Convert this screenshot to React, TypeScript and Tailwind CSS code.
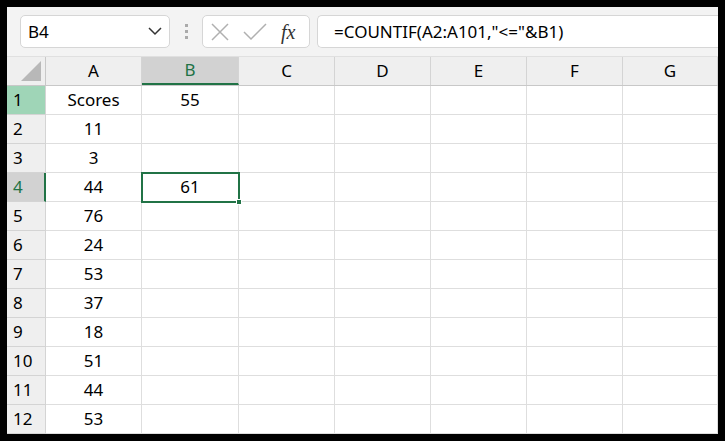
import React from "react";

const cols = ["A","B","C","D","E","F","G"];
const widths = [96,97,96,96,96,96,95];
const colA = ["Scores","11","3","44","76","24","53","37","18","51","44","53"];

export default function App() {
  return (
    <div className="w-[725px] h-[441px] bg-black pt-[7px] pl-[7px]" style={{fontFamily:"'Noto Sans','Open Sans',sans-serif"}}>
      <div className="w-[711px] h-[427px] bg-white flex flex-col overflow-hidden">
        <div className="h-[50px] bg-[#f3f3f3] flex items-center pl-[13px] gap-0 border-b border-[#e0e0e0]">
          <div className="w-[150px] h-[33px] bg-white border border-[#d6d6d6] rounded-[5px] flex items-center justify-between px-[7px] text-[17px] text-black">
            <span>B4</span>
            <svg width="14" height="9" viewBox="0 0 14 9"><path d="M1 1l6 6 6-6" stroke="#333" strokeWidth="1.5" fill="none"/></svg>
          </div>
          <div className="w-[32px] flex flex-col items-center gap-[3px]">
            <div className="w-[3px] h-[3px] bg-[#aaa]"/><div className="w-[3px] h-[3px] bg-[#aaa]"/><div className="w-[3px] h-[3px] bg-[#aaa]"/>
          </div>
          <div className="w-[108px] h-[33px] bg-white border border-[#d6d6d6] rounded-[5px] flex items-center px-[8px] gap-[14px]">
            <svg width="18" height="18" viewBox="0 0 18 18"><path d="M1 1l16 16M17 1L1 17" stroke="#b0b0b0" strokeWidth="1.5"/></svg>
            <svg width="24" height="18" viewBox="0 0 24 18"><path d="M1 9l7 7L23 1" stroke="#b0b0b0" strokeWidth="1.5" fill="none"/></svg>
            <span className="italic text-[20px] text-[#333]" style={{fontFamily:"'Liberation Serif',serif"}}>fx</span>
          </div>
          <div className="ml-[7px] flex-1 h-[33px] bg-white border border-[#d6d6d6] border-r-0 rounded-l-[5px] flex items-center pl-[16px] text-[17px] text-black">
            =COUNTIF(A2:A101,"&lt;="&amp;B1)
          </div>
        </div>
        <div className="flex h-[29px] bg-[#efefef] border-b border-[#c8c8c8]">
          <div className="w-[39px] relative border-r border-[#c8c8c8]">
            <div className="absolute right-[4px] bottom-[4px] w-0 h-0 border-l-[20px] border-l-transparent border-b-[20px] border-b-[#b8b8b8]"/>
          </div>
          {cols.map((c,i)=>(
            <div key={c} style={{width:widths[i]}} className={`flex items-center justify-center text-[17px] border-r border-[#d4d4d4] ${c==="B"?"bg-[#d2d2d2] text-[#217346] border-b-2 border-b-[#217346]":"text-black"}`}>{c}</div>
          ))}
        </div>
        {colA.map((a,r)=>{
          const n=r+1;
          return (
            <div key={n} className="flex h-[29px] shrink-0">
              <div className={`w-[39px] flex items-center pl-[6px] text-[17px] border-r border-b border-[#d4d4d4] ${n===1?"bg-[#9fd5b7] text-black":n===4?"bg-[#d2d2d2] text-[#217346] border-r-2 border-r-[#217346]":"bg-[#efefef] text-black"}`}>{n}</div>
              {cols.map((c,i)=>{
                let v="";
                if(c==="A") v=a;
                if(c==="B"&&n===1) v="55";
                if(c==="B"&&n===4) v="61";
                const sel=c==="B"&&n===4;
                return (
                  <div key={c} style={{width:widths[i]}} className={`relative flex items-center justify-center text-[17px] text-black border-r border-b border-[#dedede] ${sel?"outline outline-2 outline-[#217346] -outline-offset-1 z-10":""}`}>
                    {v}
                    {sel && <div className="absolute -right-[4px] -bottom-[4px] w-[6px] h-[6px] bg-[#217346] border border-white"/>}
                  </div>
                );
              })}
            </div>
          );
        })}
      </div>
    </div>
  );
}
